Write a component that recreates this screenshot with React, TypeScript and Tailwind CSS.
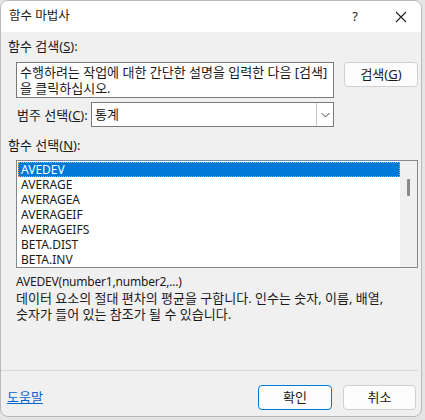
import React from "react"

const FONT = { fontFamily: '"Noto Sans", "Noto Sans CJK KR", sans-serif' }

const functions = ["AVEDEV", "AVERAGE", "AVERAGEA", "AVERAGEIF", "AVERAGEIFS", "BETA.DIST", "BETA.INV"]

export default function App() {
  return (
    <div className="w-[425px] h-[420px] bg-[#e4e4e4] overflow-hidden text-[13px] text-[#1a1a1a]" style={FONT}>
      <div className="w-[422px] h-[417px] rounded-[8px] border border-[#b9b9b9] bg-[#f0f0f0] overflow-hidden flex flex-col">
        {/* Title bar */}
        <div className="h-[31px] bg-white flex items-center shrink-0">
          <span className="pl-[8px] text-[12.5px] leading-none">함수 마법사</span>
          <span className="ml-auto w-[20px] text-center text-[13px] leading-none mr-[30px]">?</span>
          <svg width="12" height="12" viewBox="0 0 12 12" className="mr-[14px]">
            <path d="M1 1 L11 11 M11 1 L1 11" stroke="#222" strokeWidth="1.1" />
          </svg>
        </div>

        <div className="flex flex-col flex-1">
          <div className="mt-[6px] ml-[7px] leading-[16px]">
            함수 검색(<span className="underline">S</span>):
          </div>

          <div className="flex mt-[8px] ml-[15px] items-start">
            <div className="w-[318px] h-[36px] border border-[#7a7a7a] bg-white px-[3px] pt-[1px] leading-[16px] whitespace-nowrap">
              수행하려는 작업에 대한 간단한 설명을 입력한 다음 [검색]
              <br />을 클릭하십시오.
            </div>
            <button className="ml-[10px] w-[74px] h-[25px] rounded-[4px] border border-[#d0d0d0] bg-[#fdfdfd] leading-none">
              검색(<span className="underline">G</span>)
            </button>
          </div>

          <div className="flex items-center mt-[4px]">
            <span className="w-[90px] pl-[16px] leading-[16px] whitespace-nowrap">
              범주 선택(<span className="underline">C</span>):
            </span>
            <div className="w-[243px] h-[25px] border border-[#7a7a7a] bg-white flex items-center">
              <span className="pl-[3px] flex-1">통계</span>
              <div className="w-[17px] h-[23px] border-l border-[#c8c8c8] flex items-center justify-center">
                <svg width="9" height="6" viewBox="0 0 9 6">
                  <path d="M0.5 1 L4.5 5 L8.5 1" fill="none" stroke="#444" strokeWidth="1" />
                </svg>
              </div>
            </div>
          </div>

          <div className="mt-[10px] ml-[7px] leading-[16px]">
            함수 선택(<span className="underline">N</span>):
          </div>

          <div className="mt-[7px] ml-[15px] w-[402px] h-[108px] border border-[#828790] bg-white flex text-[12px]">
            <div className="flex-1 pt-[1px] pl-[1px]">
              {functions.map((f, i) => (
                <div
                  key={f}
                  className={
                    i === 0
                      ? "h-[15px] leading-[13px] pl-[2px] bg-[#0078d7] text-white border border-dotted border-[#f2a23a]"
                      : "h-[15px] leading-[15px] pl-[3px]"
                  }
                >
                  {f}
                </div>
              ))}
            </div>
            <div className="w-[17px] bg-[#f0f0f0] flex justify-center">
              <div className="mt-[18px] w-[3px] h-[17px] bg-[#8a8a8a] rounded-[1px]" />
            </div>
          </div>

          <div className="mt-[6px] ml-[15px] leading-[16px] text-[12px] tracking-[-0.2px]">
            AVEDEV(number1,number2,...)
          </div>
          <div className="ml-[15px] leading-[16px] whitespace-nowrap">
            데이터 요소의 절대 편차의 평균을 구합니다. 인수는 숫자, 이름, 배열,
            <br />
            숫자가 들어 있는 참조가 될 수 있습니다.
          </div>

          <div className="mt-auto mr-[3px] h-px bg-[#d9d9d9]" />

          <div className="flex items-center mt-[14px] mb-[6px] pr-[5px]">
            <span className="ml-[6px] text-[#0066cc] underline">도움말</span>
            <button className="ml-auto w-[74px] h-[25px] rounded-[4px] border border-[#0078d4] bg-[#fdfdfd] leading-none">
              확인
            </button>
            <button className="ml-[11px] w-[73px] h-[25px] rounded-[4px] border border-[#d0d0d0] bg-[#fdfdfd] leading-none">
              취소
            </button>
          </div>
        </div>
      </div>
    </div>
  )
}
